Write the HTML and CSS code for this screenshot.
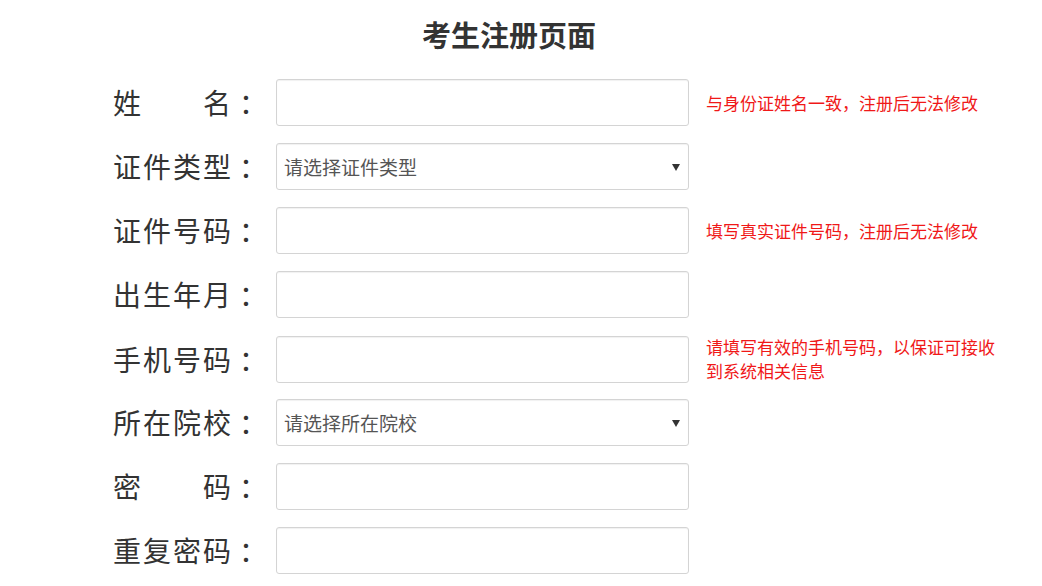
FILE: index.html
```html
<!DOCTYPE html>
<html lang="zh-CN">
<head>
<meta charset="utf-8">
<title>考生注册页面</title>
<link rel="stylesheet" href="styles.css">
</head>
<body>
<div class="page">
  <h1 class="title">考生注册页面</h1>
  <form class="form">
    <div class="row">
      <label class="label"><span class="name">姓名</span><span class="colon">：</span></label>
      <input class="control" type="text">
      <div class="hint">与身份证姓名一致，注册后无法修改</div>
    </div>
    <div class="row">
      <label class="label"><span class="name">证件类型</span><span class="colon">：</span></label>
      <div class="select">
        <span class="select-text">请选择证件类型</span>
        <svg class="caret" width="8" height="7" viewBox="0 0 8 7"><path d="M0 0H8L4 7Z" fill="#333"/></svg>
      </div>
      <div class="hint"></div>
    </div>
    <div class="row">
      <label class="label"><span class="name">证件号码</span><span class="colon">：</span></label>
      <input class="control" type="text">
      <div class="hint">填写真实证件号码，注册后无法修改</div>
    </div>
    <div class="row">
      <label class="label"><span class="name">出生年月</span><span class="colon">：</span></label>
      <input class="control" type="text">
      <div class="hint"></div>
    </div>
    <div class="row">
      <label class="label"><span class="name">手机号码</span><span class="colon">：</span></label>
      <input class="control" type="text">
      <div class="hint">请填写有效的手机号码，以保证可接收到系统相关信息</div>
    </div>
    <div class="row">
      <label class="label"><span class="name">所在院校</span><span class="colon">：</span></label>
      <div class="select">
        <span class="select-text">请选择所在院校</span>
        <svg class="caret" width="8" height="7" viewBox="0 0 8 7"><path d="M0 0H8L4 7Z" fill="#333"/></svg>
      </div>
      <div class="hint"></div>
    </div>
    <div class="row">
      <label class="label"><span class="name">密码</span><span class="colon">：</span></label>
      <input class="control" type="password">
      <div class="hint"></div>
    </div>
    <div class="row">
      <label class="label"><span class="name">重复密码</span><span class="colon">：</span></label>
      <input class="control" type="password">
      <div class="hint"></div>
    </div>
  </form>
</div>
</body>
</html>
```
FILE: styles.css
```css
* { box-sizing: border-box; }
html, body { margin: 0; padding: 0; background: #fff; }
body {
  font-family: "Noto Sans CJK SC", "Noto Sans", sans-serif;
  color: #333;
  width: 1042px;
  height: 586px;
  overflow: hidden;
}
.page { padding-top: 14px; }
.title {
  margin: 0;
  text-align: center;
  font-size: 29px;
  line-height: 40px;
  font-weight: 700;
  color: #333;
  padding-right: 24px;
}
.form {
  margin-top: 25px;
  padding-left: 113px;
  display: flex;
  flex-direction: column;
  gap: 17px;
}
.row {
  display: grid;
  grid-template-columns: 146px 413px 300px;
  column-gap: 17px;
  height: 47px;
  align-items: center;
}
.label {
  font-size: 28px;
  line-height: 47px;
  color: #333;
  white-space: nowrap;
  display: flex;
}
.name {
  display: inline-block;
  width: 118px;
  text-align: justify;
  text-align-last: justify;
}
.colon {
  display: inline-block;
  width: 28px;
  padding-left: 8px;
}
.control {
  display: block;
  width: 413px;
  height: 47px;
  margin: 0;
  border: 1px solid #d4d4d4;
  border-radius: 3px;
  box-shadow: inset 0 1px 1px rgba(0,0,0,0.06);
  background: #fff;
  padding: 0 9px;
  font-size: 19px;
  font-family: inherit;
  outline: none;
}
.select {
  position: relative;
  width: 413px;
  height: 47px;
  border: 1px solid #d4d4d4;
  border-radius: 3px;
  box-shadow: inset 0 1px 1px rgba(0,0,0,0.06);
  background: #fff;
  display: flex;
  align-items: center;
  padding-left: 7px;
}
.select-text {
  font-size: 19px;
  color: #555;
  line-height: 1;
}
.caret {
  position: absolute;
  right: 8px;
  top: 20px;
}
.hint {
  font-size: 17px;
  line-height: 24px;
  color: #f01818;
  width: 300px;
}
```
